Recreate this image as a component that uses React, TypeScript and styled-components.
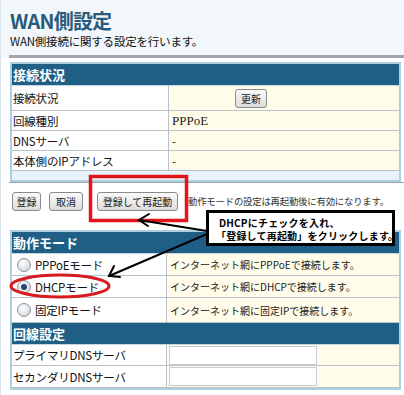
import React from "react";
import styled, { createGlobalStyle } from "styled-components";

const Global = createGlobalStyle`
  html, body { margin: 0; padding: 0; }
  body { font-family: "Noto Sans CJK JP", "Noto Sans", sans-serif; }
`;

const Page = styled.div`
  position: relative;
  width: 404px;
  height: 395px;
  overflow: hidden;
  background: linear-gradient(#f2f7fc 0px, #f2f7fc 58px, #ffffff 58px);
  border-left: 1px solid #d6e2ec;
  box-sizing: border-box;
  padding-left: 9px;
`;

const Title = styled.h1`
  margin: 0;
  padding-top: 7px;
  height: 27px;
  font-size: 20px;
  line-height: 27px;
  font-weight: 700;
  color: #2b5b7b;
  letter-spacing: -0.8px;
`;

const Sub = styled.div`
  font-size: 11.5px;
  line-height: 14px;
  height: 21px;
  color: #111;
  letter-spacing: -0.2px;
`;

const Rule = styled.div`
  margin-left: -1px;
  height: 3px;
  background: #a2a6a8;
  margin-right: -2px;
`;

const Section = styled.div<{ $top: number }>`
  margin-top: ${(p) => p.$top}px;
  width: 387px;
  border: 2px solid #aecfe0;
  background: #eaf2f9;
`;

const Header = styled.div`
  height: 21px;
  background: #1f5f86;
  color: #fff;
  font-weight: 700;
  font-size: 13px;
  line-height: 21px;
  padding-left: 1px;
  border-bottom: 1px solid #c5d6e2;
`;

const Row = styled.div<{ $h: number; $split: number }>`
  display: grid;
  grid-template-columns: ${(p) => p.$split}px 1fr;
  height: ${(p) => p.$h}px;
  border-bottom: 1px solid #b9c2c8;
  box-sizing: border-box;
`;

const Label = styled.div`
  background: #ffffff;
  font-size: 11.5px;
  letter-spacing: -0.2px;
  color: #111;
  display: flex;
  align-items: center;
  padding-left: 1px;
  gap: 4px;
  border-right: 1px solid #b9c2c8;
`;

const Value = styled.div<{ $serif?: boolean; $small?: boolean }>`
  background: #fffdea;
  display: flex;
  align-items: center;
  padding-left: 3px;
  font-size: ${(p) => (p.$small ? "10px" : p.$serif ? "13px" : "11.5px")};
  font-family: ${(p) =>
    p.$serif ? '"Liberation Serif", "Noto Sans CJK JP", serif' : "inherit"};
  color: #222;
  white-space: nowrap;
`;

const Btn = styled.button<{ $w: number }>`
  width: ${(p) => p.$w}px;
  height: 19px;
  padding: 0;
  font-family: "Noto Sans CJK JP", sans-serif;
  font-size: 10px;
  color: #222;
  background: linear-gradient(#fafafa, #dcdcdc);
  border: 1px solid #8b8b8b;
  border-radius: 3px;
  white-space: nowrap;
`;

const ButtonBar = styled.div`
  display: flex;
  align-items: flex-start;
  height: 44px;
  box-sizing: border-box;
  padding-top: 9px;
  border-top: 1px solid #9ba3a8;
  margin-right: -2px;
  margin-left: -1px;
  padding-left: 3px;
`;

const Note = styled.span`
  font-size: 9.4px;
  line-height: 19px;
  color: #333;
  margin-left: 10px;
  white-space: nowrap;
  letter-spacing: -0.2px;
`;

const Radio = styled.span<{ $on?: boolean }>`
  width: 12px;
  height: 12px;
  border-radius: 50%;
  border: 1px solid #8a9299;
  background: radial-gradient(circle at 40% 35%, #ffffff, #c9ced3);
  margin-left: 4px;
  position: relative;
  flex-shrink: 0;
  &::after {
    content: "";
    display: ${(p) => (p.$on ? "block" : "none")};
    position: absolute;
    left: 3px;
    top: 3px;
    width: 6px;
    height: 6px;
    border-radius: 50%;
    background: #25476e;
  }
`;

const Input = styled.div`
  width: 146px;
  height: 17px;
  background: #fff;
  border: 1px solid #c7ccd0;
  margin-left: -1px;
`;

const Callout = styled.div`
  position: absolute;
  left: 205px;
  top: 210px;
  width: 189px;
  height: 36px;
  box-sizing: border-box;
  border: 3px solid #000;
  background: #fff;
  font-weight: 700;
  font-size: 10px;
  line-height: 13px;
  color: #000;
  padding: 3px 0 0 10px;
  white-space: nowrap;
  letter-spacing: 0.2px;
`;

const Overlay = styled.svg`
  position: absolute;
  left: 0;
  top: 0;
  pointer-events: none;
`;

export default function App() {
  return (
    <>
      <Global />
      <Page>
        <Title>WAN側設定</Title>
        <Sub>WAN側接続に関する設定を行います。</Sub>
        <Rule />
        <Section $top={4}>
          <Header>接続状況</Header>
          <Row $h={25} $split={157}>
            <Label>接続状況</Label>
            <Value>
              <Btn $w={32} style={{ marginLeft: 63 }}>更新</Btn>
            </Value>
          </Row>
          <Row $h={20} $split={157}>
            <Label>回線種別</Label>
            <Value $serif>PPPoE</Value>
          </Row>
          <Row $h={20} $split={157}>
            <Label>DNSサーバ</Label>
            <Value>-</Value>
          </Row>
          <Row $h={20} $split={157}>
            <Label>本体側のIPアドレス</Label>
            <Value>-</Value>
          </Row>
          <div style={{ height: 9 }} />
        </Section>
        <ButtonBar>
          <Btn $w={29}>登録</Btn>
          <Btn $w={34} style={{ marginLeft: 8 }}>取消</Btn>
          <Btn $w={81} style={{ marginLeft: 14 }}>登録して再起動</Btn>
          <Note>動作モードの設定は再起動後に有効になります。</Note>
        </ButtonBar>
        <Section $top={4}>
          <Header>動作モード</Header>
          <Row $h={22} $split={155}>
            <Label><Radio />PPPoEモード</Label>
            <Value $small>インターネット網にPPPoEで接続します。</Value>
          </Row>
          <Row $h={22} $split={155}>
            <Label><Radio $on />DHCPモード</Label>
            <Value $small>インターネット網にDHCPで接続します。</Value>
          </Row>
          <Row $h={25} $split={155}>
            <Label><Radio />固定IPモード</Label>
            <Value $small>インターネット網に固定IPで接続します。</Value>
          </Row>
          <Header>回線設定</Header>
          <Row $h={21} $split={155}>
            <Label>プライマリDNSサーバ</Label>
            <Value><Input /></Value>
          </Row>
          <Row $h={22} $split={155}>
            <Label>セカンダリDNSサーバ</Label>
            <Value><Input /></Value>
          </Row>
        </Section>
        <Callout>
          <div>DHCPにチェックを入れ、</div>
          <div style={{ marginLeft: -3 }}>「登録して再起動」をクリックします。</div>
        </Callout>
        <Overlay width="404" height="395" viewBox="0 0 404 395">
          <rect x="89.5" y="176.5" width="96" height="44" fill="none" stroke="#e0161b" strokeWidth="3.5" />
          <ellipse cx="59" cy="286" rx="49" ry="11" fill="none" stroke="#d81b20" strokeWidth="3" />
          <g stroke="#000" strokeWidth="2" fill="none" strokeLinecap="round">
            <line x1="206" y1="231" x2="138" y2="220" />
            <polyline points="148,214 138,220 147,226" />
            <line x1="206" y1="234" x2="108" y2="276" />
            <polyline points="113,266 108,276 119,277" />
          </g>
        </Overlay>
      </Page>
    </>
  );
}
